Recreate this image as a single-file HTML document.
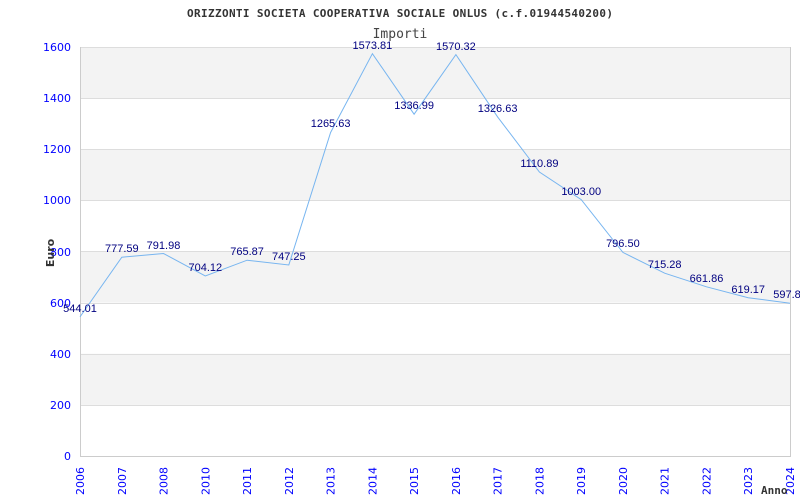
<!DOCTYPE html><html><head><style>body{margin:0;background:#fff}svg{display:block}</style></head><body>
<svg width="800" height="500" xmlns="http://www.w3.org/2000/svg">
<rect width="800" height="500" fill="#fff"/>
<rect x="80" y="47" width="710" height="51.1" fill="#f3f3f3"/>
<rect x="80" y="149.3" width="710" height="51.1" fill="#f3f3f3"/>
<rect x="80" y="251.5" width="710" height="51.1" fill="#f3f3f3"/>
<rect x="80" y="353.8" width="710" height="51.1" fill="#f3f3f3"/>
<g stroke="#dddddd" stroke-width="1">
<line x1="80" y1="47.5" x2="790" y2="47.5"/><line x1="80" y1="98.5" x2="790" y2="98.5"/><line x1="80" y1="149.5" x2="790" y2="149.5"/><line x1="80" y1="200.5" x2="790" y2="200.5"/><line x1="80" y1="251.5" x2="790" y2="251.5"/><line x1="80" y1="303.5" x2="790" y2="303.5"/><line x1="80" y1="354.5" x2="790" y2="354.5"/><line x1="80" y1="405.5" x2="790" y2="405.5"/>
</g>
<g stroke="#cccccc"><line x1="80.5" y1="47" x2="80.5" y2="456"/><line x1="80" y1="456.5" x2="790" y2="456.5"/><line x1="790.5" y1="47" x2="790.5" y2="457"/></g>
<text x="187" y="17" textLength="426" lengthAdjust="spacing" font-family="DejaVu Sans Mono, Liberation Mono, monospace" font-weight="bold" font-size="11" fill="#333">ORIZZONTI SOCIETA COOPERATIVA SOCIALE ONLUS (c.f.01944540200)</text>
<text x="400" y="38" text-anchor="middle" font-family="DejaVu Sans Mono, Liberation Mono, monospace" font-size="13" fill="#444">Importi</text>
<g font-family="DejaVu Sans, sans-serif" font-size="11" fill="#0000ff" text-anchor="end">
<text x="71" y="51">1600</text><text x="71" y="102">1400</text><text x="71" y="153">1200</text><text x="71" y="204">1000</text><text x="71" y="256">800</text><text x="71" y="307">600</text><text x="71" y="358">400</text><text x="71" y="409">200</text><text x="71" y="460">0</text>
</g>
<text transform="translate(54,253) rotate(-90)" text-anchor="middle" font-family="DejaVu Sans, sans-serif" font-weight="bold" font-size="11" fill="#333">Euro</text>
<g font-family="DejaVu Sans, sans-serif" font-size="11" fill="#0000ff" text-anchor="end">
<text transform="translate(84,467) rotate(-90)">2006</text>
<text transform="translate(125.8,467) rotate(-90)">2007</text>
<text transform="translate(167.5,467) rotate(-90)">2008</text>
<text transform="translate(209.3,467) rotate(-90)">2010</text>
<text transform="translate(251.1,467) rotate(-90)">2011</text>
<text transform="translate(292.8,467) rotate(-90)">2012</text>
<text transform="translate(334.6,467) rotate(-90)">2013</text>
<text transform="translate(376.4,467) rotate(-90)">2014</text>
<text transform="translate(418.1,467) rotate(-90)">2015</text>
<text transform="translate(459.9,467) rotate(-90)">2016</text>
<text transform="translate(501.6,467) rotate(-90)">2017</text>
<text transform="translate(543.4,467) rotate(-90)">2018</text>
<text transform="translate(585.2,467) rotate(-90)">2019</text>
<text transform="translate(626.9,467) rotate(-90)">2020</text>
<text transform="translate(668.7,467) rotate(-90)">2021</text>
<text transform="translate(710.5,467) rotate(-90)">2022</text>
<text transform="translate(752.2,467) rotate(-90)">2023</text>
<text transform="translate(794,467) rotate(-90)">2024</text>
</g>
<text x="761" y="494" font-family="DejaVu Sans Mono, Liberation Mono, monospace" font-weight="bold" font-size="11" fill="#333">Anno</text>
<polyline fill="none" stroke="#77b5f0" stroke-width="1" points="80,316.9 121.8,257.2 163.5,253.5 205.3,276 247.1,260.2 288.8,265 330.6,132.5 372.4,53.7 414.1,114.2 455.9,54.6 497.6,116.9 539.4,172 581.2,199.6 622.9,252.4 664.7,273.2 706.5,286.8 748.2,297.7 790,303.2"/>
<g font-family="Liberation Sans, sans-serif" font-size="11" fill="#000080" text-anchor="middle">
<text x="80" y="312">544.01</text><text x="121.8" y="252">777.59</text><text x="163.5" y="249">791.98</text><text x="205.3" y="271">704.12</text><text x="247.1" y="255">765.87</text><text x="288.8" y="260">747.25</text><text x="330.6" y="127">1265.63</text><text x="372.4" y="49">1573.81</text><text x="414.1" y="109">1336.99</text><text x="455.9" y="50">1570.32</text><text x="497.6" y="112">1326.63</text><text x="539.4" y="167">1110.89</text><text x="581.2" y="195">1003.00</text><text x="622.9" y="247">796.50</text><text x="664.7" y="268">715.28</text><text x="706.5" y="282">661.86</text><text x="748.2" y="293">619.17</text><text x="787" y="298">597.8</text>
</g>
</svg></body></html>
